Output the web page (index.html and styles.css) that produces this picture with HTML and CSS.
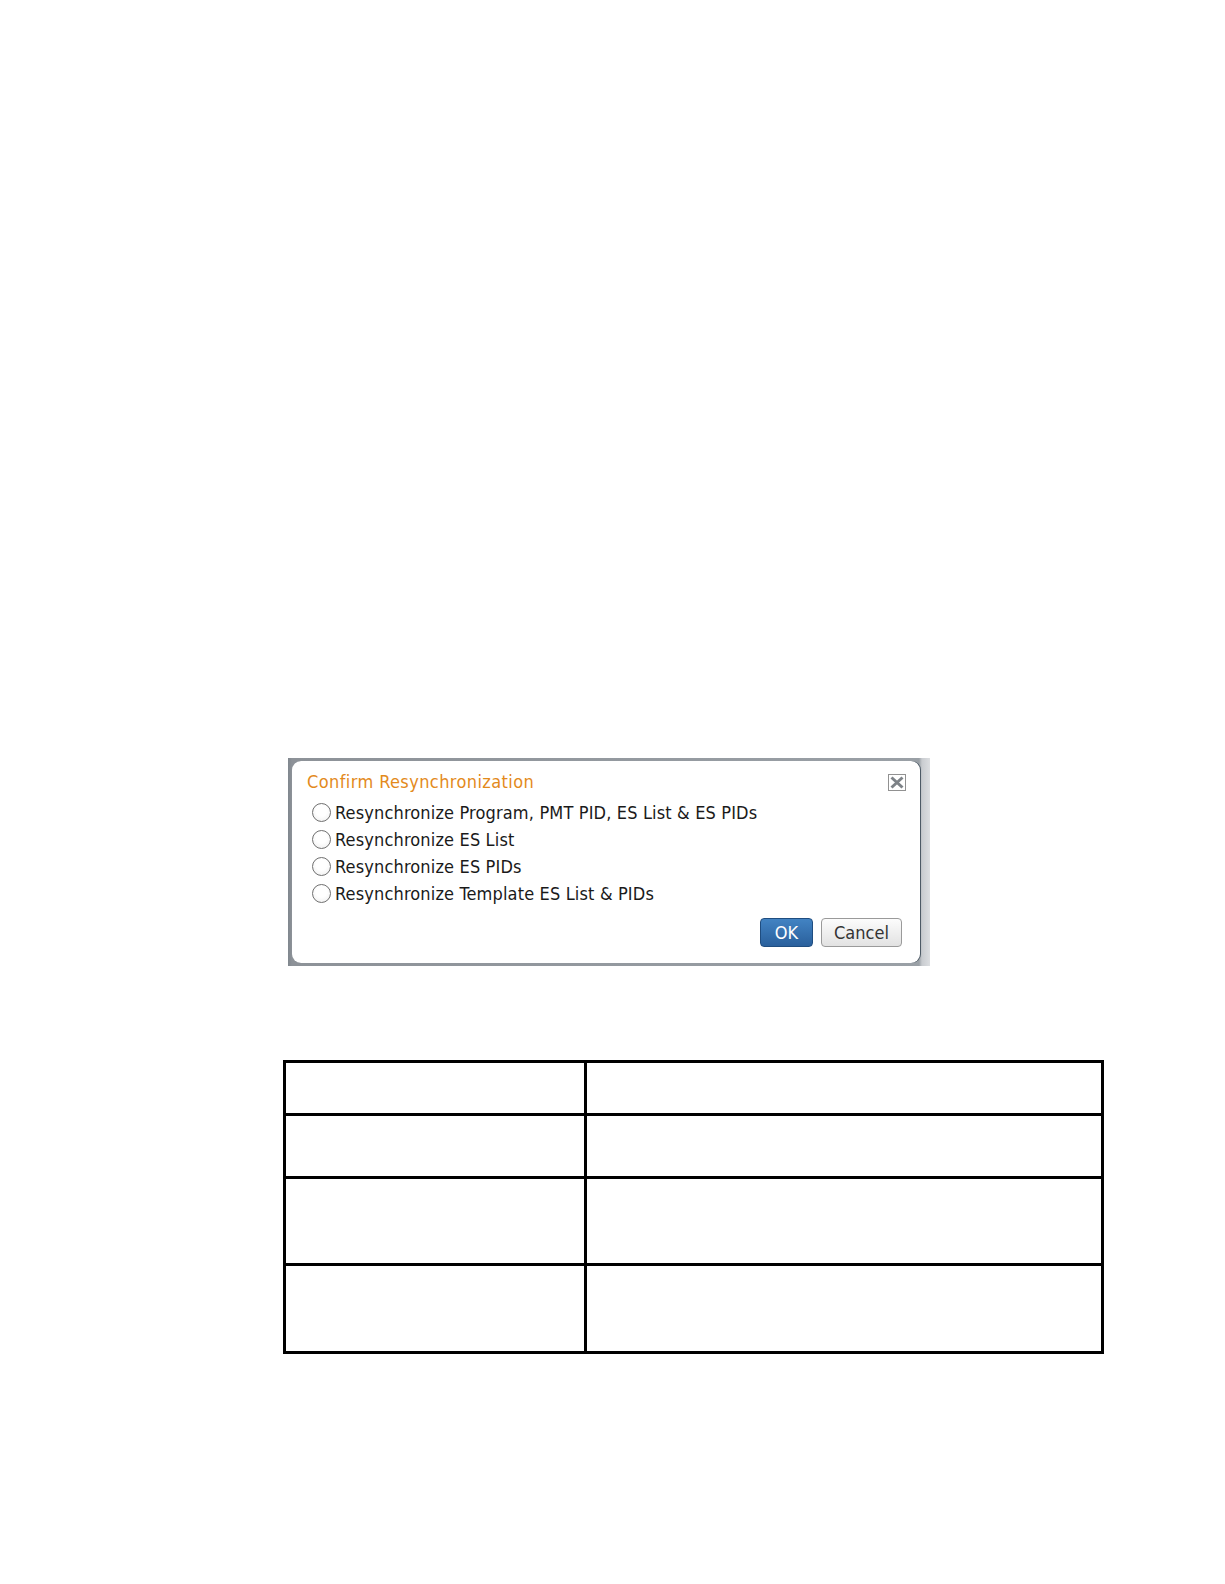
FILE: index.html
```html
<!DOCTYPE html>
<html>
<head>
<meta charset="utf-8">
<link rel="stylesheet" href="styles.css">
</head>
<body>
<div class="page">
  <div class="shot">
    <div class="dialog">
      <div class="head">
        <span class="title">Confirm Resynchronization</span>
        <span class="close">
          <svg width="18" height="17" viewBox="0 0 18 17">
            <rect x="0.5" y="0.5" width="17" height="16" fill="none" stroke="#222" stroke-width="1" stroke-dasharray="1 1"/>
            <path d="M3.5 3.5 L14.5 13.5 M14.5 3.5 L3.5 13.5" stroke="#7d8287" stroke-width="3" stroke-linecap="butt"/>
          </svg>
        </span>
      </div>
      <ul class="opts">
        <li><span class="radio"></span>Resynchronize Program, PMT PID, ES List &amp; ES PIDs</li>
        <li><span class="radio"></span>Resynchronize ES List</li>
        <li><span class="radio"></span>Resynchronize ES PIDs</li>
        <li><span class="radio"></span>Resynchronize Template ES List &amp; PIDs</li>
      </ul>
      <div class="actions">
        <button class="btn ok">OK</button>
        <button class="btn cancel">Cancel</button>
      </div>
    </div>
  </div>

  <table class="grid">
    <tr class="r1"><td class="c1"></td><td></td></tr>
    <tr class="r2"><td class="c1"></td><td></td></tr>
    <tr class="r3"><td class="c1"></td><td></td></tr>
    <tr class="r4"><td class="c1"></td><td></td></tr>
  </table>
</div>
</body>
</html>
```

FILE: styles.css
```css
html {
  overflow: hidden;
}
html, body {
  margin: 0;
  padding: 0;
  background: #fff;
}
.page {
  padding-top: 758px;
  font-family: "DejaVu Sans Condensed", "DejaVu Sans", sans-serif;
  font-stretch: condensed;
}
.shot {
  margin-left: 288px;
  width: 642px;
  height: 208px;
  box-sizing: border-box;
  background: linear-gradient(to right, #80878e 0, #8d9298 4px, #9aa0a6 631px, #c9ccd0 634px, #dcdee1 642px);
  padding: 3px 10px 3px 4px;
  display: flex;
}
.dialog {
  flex: 1;
  background: #fff;
  border-radius: 9px;
  box-shadow: 1px 0 0 #4d5a66;
  padding: 10px 14px 0 15px;
  box-sizing: border-box;
}
.head {
  display: flex;
  justify-content: space-between;
  align-items: flex-start;
  height: 28px;
}
.title {
  color: #e38a1c;
  font-size: 18px;
  letter-spacing: 0.4px;
  line-height: 22px;
}
.close {
  margin-top: 3px;
  display: block;
  height: 17px;
}
.opts {
  list-style: none;
  margin: 0;
  padding: 0 0 0 5px;
}
.opts li {
  height: 27px;
  display: flex;
  align-items: center;
  font-size: 18px;
  letter-spacing: 0.15px;
  color: #1a1a1a;
}
.radio {
  width: 19px;
  height: 19px;
  border: 1.5px solid #707070;
  border-radius: 50%;
  margin-right: 4px;
  background: radial-gradient(circle at 50% 40%, #ffffff 40%, #ececec 100%);
  box-sizing: border-box;
  flex: none;
}
.actions {
  display: flex;
  justify-content: flex-end;
  gap: 8px;
  margin-top: 11px;
  padding-right: 4px;
}
.btn {
  height: 29px;
  border-radius: 4px;
  font-family: "DejaVu Sans Condensed", "DejaVu Sans", sans-serif;
  font-stretch: condensed;
  font-size: 18px;
  padding: 0;
}
.ok {
  width: 53px;
  background: linear-gradient(#4283c3, #2a609c);
  border: 1px solid #1f4d80;
  color: #fff;
}
.cancel {
  width: 81px;
  background: linear-gradient(#fcfcfc, #e2e2e2);
  border: 1px solid #9a9a9a;
  color: #333;
}
.grid {
  margin-top: 94px;
  margin-left: 283px;
  width: 821px;
  border-collapse: collapse;
}
.grid td {
  border: 3px solid #000;
  padding: 0;
}
.grid .c1 { width: 298px; }
.r1 { height: 53px; }
.r2 { height: 63px; }
.r3 { height: 87px; }
.r4 { height: 88px; }
```
